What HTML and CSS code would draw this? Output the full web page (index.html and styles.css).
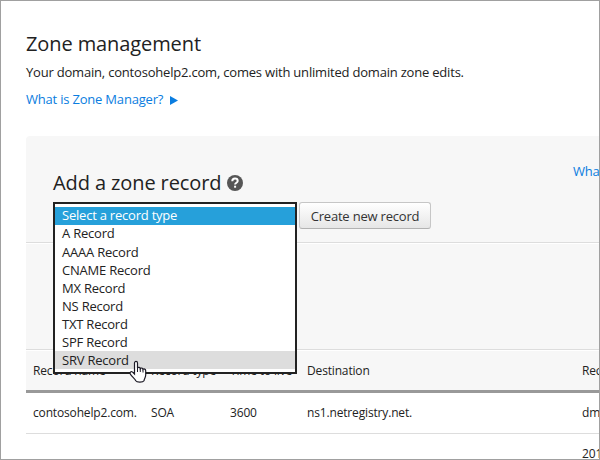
FILE: index.html
```
<!DOCTYPE html>
<html lang="en">
<head>
<meta charset="utf-8">
<title>Zone management</title>
<link rel="stylesheet" href="styles.css">
</head>
<body>
<main class="page">
  <h1 class="title">Zone management</h1>
  <p class="intro">Your domain, contosohelp2.com, comes with unlimited domain zone edits.</p>
  <a class="link"><span>What is Zone Manager?</span><svg class="arrow" viewBox="0 0 8 9"><path d="M0 0 8 4.5 0 9Z" fill="#0a7de0"/></svg></a>
  <section class="panel">
    <div class="add">
      <div class="add-top"><a class="what">What</a></div>
      <h2 class="heading"><span>Add a zone record</span><svg class="help" viewBox="0 0 16 16"><circle cx="8" cy="8" r="8" fill="#565656"/><path d="M5.3 6.2C5.3 4.4 6.4 3.6 8 3.6S10.7 4.5 10.7 6C10.7 7.7 8.1 7.8 8.1 9.6" fill="none" stroke="#fff" stroke-width="2"/><rect x="7.1" y="10.7" width="2" height="2" fill="#fff"/></svg></h2>
      <div class="controls">
        <div class="select">
          <ul class="menu">
            <li class="option selected">Select a record type</li>
            <li class="option">A Record</li>
            <li class="option">AAAA Record</li>
            <li class="option">CNAME Record</li>
            <li class="option">MX Record</li>
            <li class="option">NS Record</li>
            <li class="option">TXT Record</li>
            <li class="option">SPF Record</li>
            <li class="option hover">SRV Record</li>
          </ul>
          <svg class="cursor" viewBox="0 0 18 24"><path d="M5.5 14V3C5.5 .9 8.5 .9 8.5 3V8C9 6.9 11.2 7.2 11.3 8.6C12 7.5 14 8 14 9.4C15 8.5 16.7 9.2 16.7 10.8V15C16.7 17.5 15.2 18.5 15 20.8C14 22.6 7.8 22.7 6.8 20.8C6 18.5 2.8 17 1.3 14C.5 12 2.2 11 3.6 12.1Z" fill="#fff" stroke="#1d1b26" stroke-width="1.2"/><path d="M8.5 7.5V12M11.3 8.5V12M14 9.5V12.5" stroke="#1d1b26" stroke-width="1" fill="none"/></svg>
        </div>
        <button class="create">Create new record</button>
      </div>
    </div>
    <div class="spacer"></div>
    <div class="row head"><span>Record name</span><span>Record type</span><span>Time to live</span><span>Destination</span><span>Record</span></div>
  </section>
  <div class="row"><span>contosohelp2.com.</span><span>SOA</span><span>3600</span><span>ns1.netregistry.net.</span><span>dm.</span></div>
  <div class="row last"><span></span><span></span><span></span><span></span><span>201</span></div>
</main>
</body>
</html>
```
FILE: styles.css
```
* { box-sizing: border-box; }
body {
  margin: 0;
  font-family: "Open Sans", sans-serif;
  color: #222;
}
.page {
  width: 600px;
  height: 460px;
  padding: 29px 0 0 25px;
  border: 1px solid #a0a0a0;
  background: #fff;
  overflow: hidden;
}
.title, .heading {
  margin: 0;
  font-size: 20px;
  font-weight: 400;
  line-height: 28px;
  letter-spacing: -0.1px;
}
.intro {
  margin: 5px 0 0;
  font-size: 13px;
  line-height: 18px;
  letter-spacing: -0.2px;
  white-space: nowrap;
}
.link {
  display: flex;
  align-items: center;
  gap: 7px;
  margin-top: 9px;
  font-size: 13px;
  line-height: 18px;
  letter-spacing: -0.2px;
  color: #0a7de0;
}
.arrow { width: 8px; height: 9px; margin-top: 3px; }
.panel {
  margin-top: 28px;
  background: #f7f7f7;
  border-top-left-radius: 4px;
}
.add {
  height: 107px;
  padding: 26px 0 0 27px;
  border-bottom: 1px solid #ddd;
}
.add-top {
  display: flex;
  justify-content: flex-end;
  height: 7px;
}
.what {
  width: 26px;
  font-size: 13px;
  line-height: 18px;
  letter-spacing: -0.2px;
  color: #0a7de0;
  white-space: nowrap;
}
.heading {
  display: flex;
  align-items: center;
  gap: 6px;
}
.help { width: 16px; height: 16px; }
.controls {
  display: flex;
  align-items: flex-start;
  gap: 2px;
  margin-top: 5px;
}
.select {
  position: relative;
  width: 244px;
  height: 28px;
}
.menu {
  position: absolute;
  top: 0;
  left: 0;
  z-index: 1;
  width: 244px;
  height: 172px;
  margin: 0;
  padding: 3px 0;
  border: 2px solid #222;
  background: #fff;
  list-style: none;
}
.option {
  height: 18px;
  padding-left: 7px;
  font-size: 13px;
  line-height: 17px;
  letter-spacing: -0.22px;
}
.option:nth-child(n+3) { line-height: 19px; }
.selected { background: #26a0da; color: #fff; }
.hover { background: #ddd; }
.cursor {
  position: absolute;
  top: 158px;
  left: 76px;
  z-index: 2;
  width: 18px;
  height: 24px;
}
.create {
  width: 132px;
  height: 27px;
  padding: 0;
  border: 1px solid #c6c6c6;
  border-bottom-color: #b2b2b2;
  border-radius: 3px;
  background: linear-gradient(#fff, #e6e6e6);
  font-family: inherit;
  font-size: 13px;
  letter-spacing: -0.2px;
  color: #333;
}
.spacer {
  height: 107px;
  border-top: 1px solid #fff;
  border-bottom: 1px solid #ddd;
}
.row {
  display: grid;
  grid-template-columns: 118px 79px 77px 275px 1fr;
  height: 41px;
  padding-left: 7px;
  border-bottom: 1px solid #ddd;
  font-size: 12px;
  line-height: 40px;
  letter-spacing: -0.16px;
  white-space: nowrap;
}
.row span { min-width: 0; }
.head {
  height: 43px;
  border-top: 1px solid #fff;
  border-bottom: 3px solid #999;
}
.last { border-bottom: 0; }
```
